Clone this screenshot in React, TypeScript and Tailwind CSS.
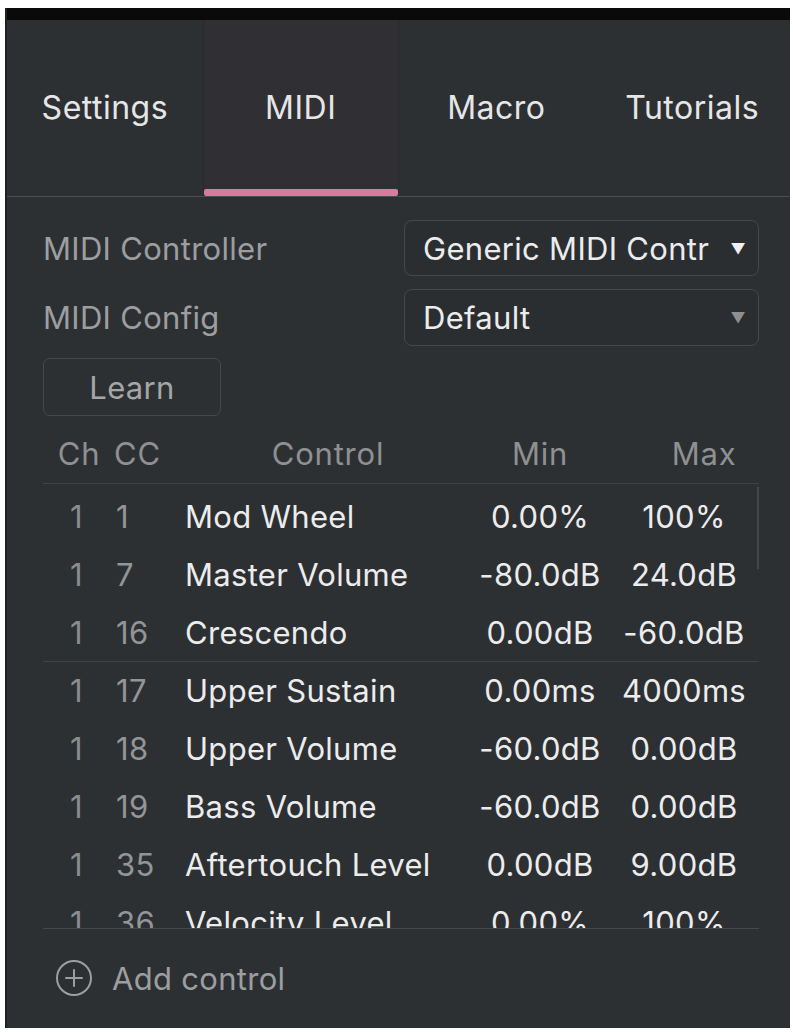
import React from "react";

const rows = [
  { ch: "1", cc: "1", name: "Mod Wheel", min: "0.00%", max: "100%" },
  { ch: "1", cc: "7", name: "Master Volume", min: "-80.0dB", max: "24.0dB" },
  { ch: "1", cc: "16", name: "Crescendo", min: "0.00dB", max: "-60.0dB" },
  { ch: "1", cc: "17", name: "Upper Sustain", min: "0.00ms", max: "4000ms" },
  { ch: "1", cc: "18", name: "Upper Volume", min: "-60.0dB", max: "0.00dB" },
  { ch: "1", cc: "19", name: "Bass Volume", min: "-60.0dB", max: "0.00dB" },
  { ch: "1", cc: "35", name: "Aftertouch Level", min: "0.00dB", max: "9.00dB" },
  { ch: "1", cc: "36", name: "Velocity Level", min: "0.00%", max: "100%" },
];

function Tab({ label, active }: { label: string; active?: boolean }) {
  return (
    <div
      className={
        "relative flex items-center justify-center " +
        (active ? "bg-[#302f34] border-x border-[#2a292d]" : "")
      }
    >
      <span className="text-[#e6e6e6] text-[32px] tracking-[0.5px]">{label}</span>
      {active && (
        <div className="absolute left-0 right-0 bottom-0 h-[7px] bg-[#d97a9f] rounded-[2px]" />
      )}
    </div>
  );
}

export default function App() {
  return (
    <div
      className="w-[793px] h-[1032px] bg-white pt-[8px] pl-[5px] pr-[3px] pb-[4px]"
      style={{ fontFamily: "Inter, 'Noto Sans', sans-serif" }}
    >
      <div className="h-full flex flex-col bg-[#2d3033] border-l-2 border-[#1e2023] text-[31px] tracking-[0.3px] leading-none">
        <div className="h-[12px] bg-[#0a0a0a] shrink-0" />
        <div className="grid grid-cols-4 h-[177px] border-b border-[#4b4e51] shrink-0">
          <Tab label="Settings" />
          <Tab label="MIDI" active />
          <Tab label="Macro" />
          <Tab label="Tutorials" />
        </div>

        <div className="flex flex-col pl-[36px] pr-[31px] pt-[23px]">
          <div className="flex items-center justify-between h-[56px]">
            <span className="text-[#9c9ea0]">MIDI Controller</span>
            <div className="w-[355px] h-[56px] rounded-[8px] border border-[#46494c] bg-[#2b2e31] flex items-center justify-between pl-[18px] pr-[12px]">
              <span className="text-[#ececec] whitespace-nowrap">Generic MIDI Contr</span>
              <span className="text-[#f0f0f0] text-[15px]">▼</span>
            </div>
          </div>
          <div className="flex items-center justify-between h-[57px] mt-[13px]">
            <span className="text-[#9c9ea0]">MIDI Config</span>
            <div className="w-[355px] h-[57px] rounded-[8px] border border-[#46494c] bg-[#2b2e31] flex items-center justify-between pl-[18px] pr-[12px]">
              <span className="text-[#ececec]">Default</span>
              <span className="text-[#8d8f91] text-[15px]">▼</span>
            </div>
          </div>
          <div className="mt-[12px]">
            <div className="w-[178px] h-[58px] rounded-[7px] border border-[#45484b] flex items-center justify-center text-[#a4a6a8]">
              Learn
            </div>
          </div>

          <div className="flex items-center h-[68px] pt-[8px] text-[#8e9092] border-b border-[#404346] tracking-[0.8px]">
            <div className="w-[67px] text-center pl-[5px]">Ch</div>
            <div className="w-[75px] pl-[4px]">CC</div>
            <div className="w-[286px] text-center">Control</div>
            <div className="w-[138px] text-center">Min</div>
            <div className="flex-1 text-center pl-[40px]">Max</div>
          </div>

          <div className="relative h-[445px] overflow-hidden border-b border-[#46494c] pt-[3px]">
            {rows.map((r, i) => (
              <div
                key={i}
                className={
                  "flex items-center h-[58px] " +
                  (i === 3 ? "border-t border-[#3f4245]" : "")
                }
              >
                <div className="w-[67px] text-center text-[#8a8c8e]">{r.ch}</div>
                <div className="w-[75px] pl-[6px] text-[#939597]">{r.cc}</div>
                <div className="w-[286px] text-[#ececec] whitespace-nowrap">{r.name}</div>
                <div className="w-[138px] text-center text-[#ececec] whitespace-nowrap">{r.min}</div>
                <div className="flex-1 text-center text-[#ececec] whitespace-nowrap">{r.max}</div>
              </div>
            ))}
            <div className="absolute right-0 top-[3px] w-[2px] h-[82px] bg-[#45484b]" />
          </div>

          <div className="flex items-center h-[98px] text-[#9c9ea0]">
            <svg width="38" height="38" viewBox="0 0 38 38" className="ml-[12px] mr-[19px]">
              <circle cx="19" cy="19" r="17" fill="none" stroke="#9c9ea0" strokeWidth="2" />
              <path d="M19 11v16M11 19h16" stroke="#9c9ea0" strokeWidth="2" strokeLinecap="round" />
            </svg>
            <span>Add control</span>
          </div>
        </div>
      </div>
    </div>
  );
}
